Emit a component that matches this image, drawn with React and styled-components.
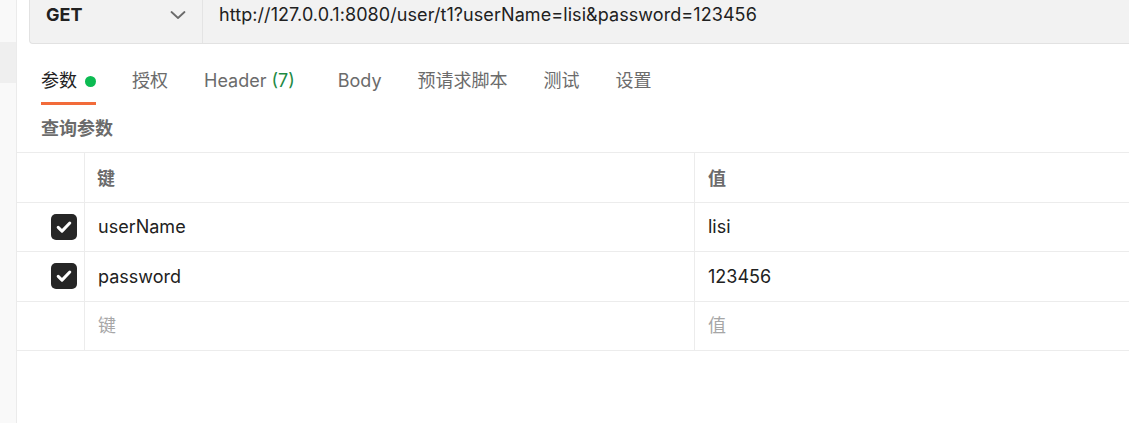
import React from 'react'
import styled, { createGlobalStyle } from 'styled-components'

const GlobalStyle = createGlobalStyle`
  html, body {
    margin: 0;
    padding: 0;
    background: #fff;
    overflow: hidden;
  }
  body {
    font-family: 'Inter', 'Noto Sans CJK SC', sans-serif;
    color: #212121;
  }
`

const Page = styled.div`
  display: flex;
  height: 423px;
  width: 1129px;
`

const Sidebar = styled.div`
  width: 16px;
  flex-shrink: 0;
  background: #f9f9f9;
  border-right: 1px solid #ebebeb;
  padding-top: 42px;
`

const SidebarItem = styled.div`
  height: 41px;
  background: #efefef;
`

const Main = styled.div`
  flex: 1;
  display: flex;
  flex-direction: column;
  min-width: 0;
`

const RequestBar = styled.div`
  display: flex;
  align-items: center;
  height: 57px;
  margin: -15px 0 0 12px;
  background: #f2f2f2;
  border: 1px solid #e2e2e2;
  border-right: none;
  border-radius: 4px 0 0 4px;
`

const Method = styled.div`
  display: flex;
  align-items: center;
  justify-content: space-between;
  width: 173px;
  height: 100%;
  box-sizing: border-box;
  padding: 0 16px 0 16px;
  border-right: 1px solid #e4e4e4;
  font-weight: 700;
  font-size: 18px;
  color: #212121;
`

const Url = styled.div`
  padding-left: 16px;
  font-size: 18px;
  letter-spacing: 0.07px;
  color: #212121;
  white-space: nowrap;
`

const Tabs = styled.div`
  display: flex;
  gap: 36px;
  margin-top: 13px;
  padding-left: 24px;
`

const Tab = styled.div`
  display: flex;
  align-items: center;
  gap: 8px;
  padding: 12px 0 9px;
  line-height: 24px;
  font-size: 18px;
  color: ${p => (p.$active ? '#212121' : '#6b6b6b')};
  border-bottom: 3px solid ${p => (p.$active ? '#f26b3a' : 'transparent')};
  margin-right: ${p => p.$extra || 0}px;
`

const Dot = styled.span`
  width: 11px;
  height: 11px;
  border-radius: 50%;
  background: #0cbb52;
`

const Count = styled.span`
  color: #1e8a44;
  margin-left: 5px;
`

const SectionTitle = styled.div`
  margin: 12px 0 11px 24px;
  line-height: 24px;
  font-size: 18px;
  font-weight: 700;
  color: #6b6b6b;
`

const Table = styled.div`
  border-top: 1px solid #ececec;
`

const Row = styled.div`
  display: grid;
  grid-template-columns: 68px 610px 1fr;
  height: 49.5px;
  box-sizing: border-box;
  border-bottom: 1px solid #ececec;
`

const CheckCell = styled.div`
  display: flex;
  align-items: center;
  justify-content: flex-end;
  padding-right: 7px;
  border-right: 1px solid #ececec;
`

const Cell = styled.div`
  display: flex;
  align-items: center;
  padding-left: ${p => p.$pad || 13}px;
  padding-bottom: ${p => (p.$placeholder ? 3 : 0)}px;
  font-size: 18px;
  font-weight: ${p => (p.$head ? 700 : 400)};
  color: ${p => (p.$head ? '#6b6b6b' : p.$placeholder ? '#a6a6a6' : '#212121')};
  border-right: ${p => (p.$divider ? '1px solid #ececec' : 'none')};
`

const Box = styled.div`
  width: 26px;
  height: 26px;
  border-radius: 5px;
  background: #262626;
  display: flex;
  align-items: center;
  justify-content: center;
`

const Checkbox = () => (
  <Box>
    <svg width="20" height="20" viewBox="0 0 20 20">
      <path d="M4.2 10.4l3.8 3.7L15.8 6" fill="none" stroke="#fff" strokeWidth="3" strokeLinecap="round" strokeLinejoin="round" />
    </svg>
  </Box>
)

const Chevron = () => (
  <svg width="16" height="10" viewBox="0 0 16 10">
    <path d="M1.5 2l6.5 6 6.5-6" fill="none" stroke="#6b6b6b" strokeWidth="1.8" strokeLinecap="round" strokeLinejoin="round" />
  </svg>
)

const params = [
  { key: 'userName', value: 'lisi' },
  { key: 'password', value: '123456' },
]

export default function App() {
  return (
    <Page>
      <GlobalStyle />
      <Sidebar>
        <SidebarItem />
      </Sidebar>
      <Main>
        <RequestBar>
          <Method>
            GET
            <Chevron />
          </Method>
          <Url>http://127.0.0.1:8080/user/t1?userName=lisi&amp;password=123456</Url>
        </RequestBar>
        <Tabs>
          <Tab $active>
            参数
            <Dot />
          </Tab>
          <Tab>授权</Tab>
          <Tab $extra={7}>
            <span>
              Header<Count>(7)</Count>
            </span>
          </Tab>
          <Tab>Body</Tab>
          <Tab>预请求脚本</Tab>
          <Tab>测试</Tab>
          <Tab>设置</Tab>
        </Tabs>
        <SectionTitle>查询参数</SectionTitle>
        <Table>
          <Row>
            <CheckCell />
            <Cell $head $divider $pad={12}>键</Cell>
            <Cell $head>值</Cell>
          </Row>
          {params.map(p => (
            <Row key={p.key}>
              <CheckCell>
                <Checkbox />
              </CheckCell>
              <Cell $divider>{p.key}</Cell>
              <Cell>{p.value}</Cell>
            </Row>
          ))}
          <Row>
            <CheckCell />
            <Cell $divider $placeholder>键</Cell>
            <Cell $placeholder>值</Cell>
          </Row>
        </Table>
      </Main>
    </Page>
  )
}
